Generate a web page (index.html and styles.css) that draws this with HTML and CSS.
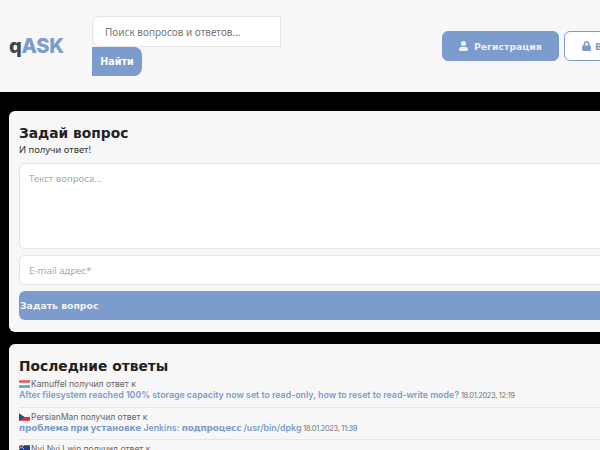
FILE: index.html
```html
<!DOCTYPE html>
<html lang="ru">
<head>
  <meta charset="UTF-8">
  <meta name="viewport" content="width=device-width, initial-scale=1.0">
  <title>qASK</title>
  <link rel="stylesheet" href="styles.css">
</head>

<body>

<!-- Header -->
<header class="header">
  <a class="logo" href="#">q<span>ASK</span></a>
  <form class="search">
    <input class="search-input" type="text" placeholder="Поиск вопросов и ответов...">
    <button class="search-btn" type="button">Найти</button>
  </form>
  <div class="auth">
    <a class="btn btn-primary" href="#">
      <svg class="icon" viewBox="0 0 448 512"><path d="M224 256a128 128 0 1 0 0-256 128 128 0 0 0 0 256zm90 32h-17a174 174 0 0 1-146 0h-17C60 288 0 348 0 422v42c0 27 21 48 48 48h352c27 0 48-21 48-48v-42c0-74-60-134-134-134z"/></svg>
      Регистрация
    </a>
    <a class="btn btn-outline" href="#">
      <svg class="icon" viewBox="0 0 448 512"><path d="M400 224h-24v-72C376 68 308 0 224 0S72 68 72 152v72H48c-26 0-48 22-48 48v192c0 26 22 48 48 48h352c26 0 48-22 48-48V272c0-26-22-48-48-48zm-104 0H152v-72c0-40 32-72 72-72s72 32 72 72v72z"/></svg>
      Вход
    </a>
  </div>
</header>

<main class="content">
  <!-- Ask form -->
  <section class="card">
    <h2 class="card-title">Задай вопрос</h2>
    <p class="card-sub">И получи ответ!</p>
    <textarea class="field field-area" placeholder="Текст вопроса..."></textarea>
    <input class="field" type="text" placeholder="E-mail адрес*">
    <button class="ask-btn" type="button">Задать вопрос</button>
  </section>

  <!-- Latest answers -->
  <section class="card">
    <h2 class="card-title">Последние ответы</h2>
    <ul class="answers">
      <li>
        <div class="who">
          <svg class="flag" viewBox="0 0 16 11"><rect width="16" height="11" rx="1" fill="#fff"/><rect width="16" height="3.7" fill="#e8505b"/><rect y="7.3" width="16" height="3.7" fill="#3fa9dc"/></svg>
          Kamuffel получил ответ к
        </div>
        <div class="line">
          <a class="q" href="#">After filesystem reached 100% storage capacity now set to read-only, how to reset to read-write mode?</a>
          <span class="date">18.01.2023, 12:19</span>
        </div>
      </li>
      <li>
        <div class="who">
          <svg class="flag" viewBox="0 0 16 11"><rect width="16" height="5.5" fill="#f4f4f4"/><rect y="5.5" width="16" height="5.5" fill="#d7313e"/><path d="M0 0l8 5.5L0 11z" fill="#1f4f8f"/></svg>
          PersianMan получил ответ к
        </div>
        <div class="line">
          <a class="q" href="#"><b>проблема при установке</b> Jenkins: <b>подпроцесс</b> /usr/bin/dpkg</a>
          <span class="date">18.01.2023, 11:39</span>
        </div>
      </li>
      <li>
        <div class="who">
          <svg class="flag" viewBox="0 0 16 11"><rect width="16" height="11" rx="1" fill="#1f3a8f"/><path d="M0 0l7 5M7 0L0 5" stroke="#fff" stroke-width="1.2"/><path d="M3.5 0v5M0 2.5h7" stroke="#d7313e" stroke-width="1.2"/></svg>
          Nyi Nyi Lwin получил ответ к
        </div>
      </li>
    </ul>
  </section>
</main>

</body>
</html>
```

FILE: styles.css
```css
html, body {
  overflow: hidden;
  height: 450px;
}

body {
  margin: 0;
  background-color: #000;
  font-family: "Inter", "Noto Sans", sans-serif;
  width: 660px;
}

/* Header */
.header {
  display: flex;
  align-items: center;
  height: 92px;
  background-color: #f7f7f7;
  padding-left: 9px;
}

.logo {
  width: 83px;
  font-family: "Inter", sans-serif;
  font-size: 20px;
  font-weight: 800;
  letter-spacing: -0.2px;
  color: #444;
  text-decoration: none;
}

.logo span {
  color: #7b9ccd;
}

.search {
  width: 189px;
}

.search-input {
  display: block;
  box-sizing: border-box;
  width: 189px;
  height: 31px;
  padding: 0 12px;
  border: 1px solid #e5e5e5;
  border-radius: 8px 0 0 8px;
  background-color: #fff;
  font-family: "Noto Sans", sans-serif;
  font-size: 10px;
}

.search-input::placeholder {
  color: #777;
  opacity: 1;
}

.search-btn {
  display: block;
  width: 50px;
  height: 29px;
  padding: 0;
  border: none;
  border-radius: 0 8px 8px 0;
  background-color: #7b9ccd;
  color: #fff;
  font-family: "DejaVu Sans", sans-serif;
  font-size: 9.6px;
  font-weight: bold;
}

.auth {
  display: flex;
  gap: 5px;
  margin-left: 161px;
}

.btn {
  display: flex;
  align-items: center;
  gap: 6px;
  box-sizing: border-box;
  height: 30px;
  border-radius: 6px;
  border: 1px solid #7b9ccd;
  font-family: "DejaVu Sans", sans-serif;
  font-size: 9.3px;
  font-weight: bold;
  text-decoration: none;
}

.btn-primary {
  width: 117px;
  padding-left: 16px;
  background-color: #7b9ccd;
  color: #f0f0f0;
}

.btn-outline {
  width: 80px;
  padding-left: 17px;
  gap: 4px;
  background-color: #fff;
  color: #7b9ccd;
}

.icon {
  width: 9px;
  height: 10px;
  fill: currentColor;
}

/* Cards */
.content {
  padding: 19px 0 0 9px;
}

.card {
  background-color: #f7f7f7;
  border-radius: 6px;
  padding: 12px 10px;
  margin-bottom: 12px;
}

.card-title {
  margin: 0;
  font-family: "DejaVu Sans", sans-serif;
  font-size: 13.8px;
  font-weight: bold;
  line-height: 20px;
  color: #222;
}

.card-sub {
  margin: 0 0 6px;
  font-family: "Noto Sans", sans-serif;
  font-size: 9.4px;
  line-height: 14px;
  color: #333;
}

.field {
  display: block;
  box-sizing: border-box;
  width: 100%;
  height: 30px;
  margin-bottom: 6px;
  padding: 0 9px;
  border: 1px solid #e3e3e3;
  border-radius: 6px;
  background-color: #fff;
  font-family: "Noto Sans", sans-serif;
  font-size: 9.6px;
}

.field-area {
  height: 86px;
  padding-top: 8px;
  resize: none;
}

.field::placeholder {
  color: #aaa;
  opacity: 1;
}

.ask-btn {
  display: block;
  width: 100%;
  height: 29px;
  padding: 0 0 0 1px;
  border: none;
  border-radius: 6px;
  background-color: #7b9ccd;
  color: #f4f4f4;
  font-family: "DejaVu Sans", sans-serif;
  font-size: 9.3px;
  font-weight: bold;
  text-align: left;
}

/* Answers list */
.answers {
  list-style-type: none;
  margin: 3px 0 0;
  padding: 0;
}

.answers li {
  padding-bottom: 5.5px;
  margin-bottom: 4px;
  border-bottom: 1px solid #e6e6e6;
}

.who {
  display: flex;
  align-items: center;
  font-size: 8.5px;
  line-height: 10px;
  color: #666;
}

.flag {
  width: 11px;
  height: 8px;
  margin-right: 1px;
}

.line {
  font-size: 7px;
  line-height: 11px;
  white-space: nowrap;
}

.q {
  font-size: 8.8px;
  font-weight: 600;
  color: #7b9ccd;
  text-decoration: none;
}

/* russian words in the title come out wider and heavier */
.q b {
  font-family: "DejaVu Sans", sans-serif;
  font-size: 8.9px;
  font-weight: bold;
  letter-spacing: -0.15px;
  word-spacing: -1px;
}

.date {
  font-size: 7.5px;
  letter-spacing: -0.35px;
  color: #777;
}
```
